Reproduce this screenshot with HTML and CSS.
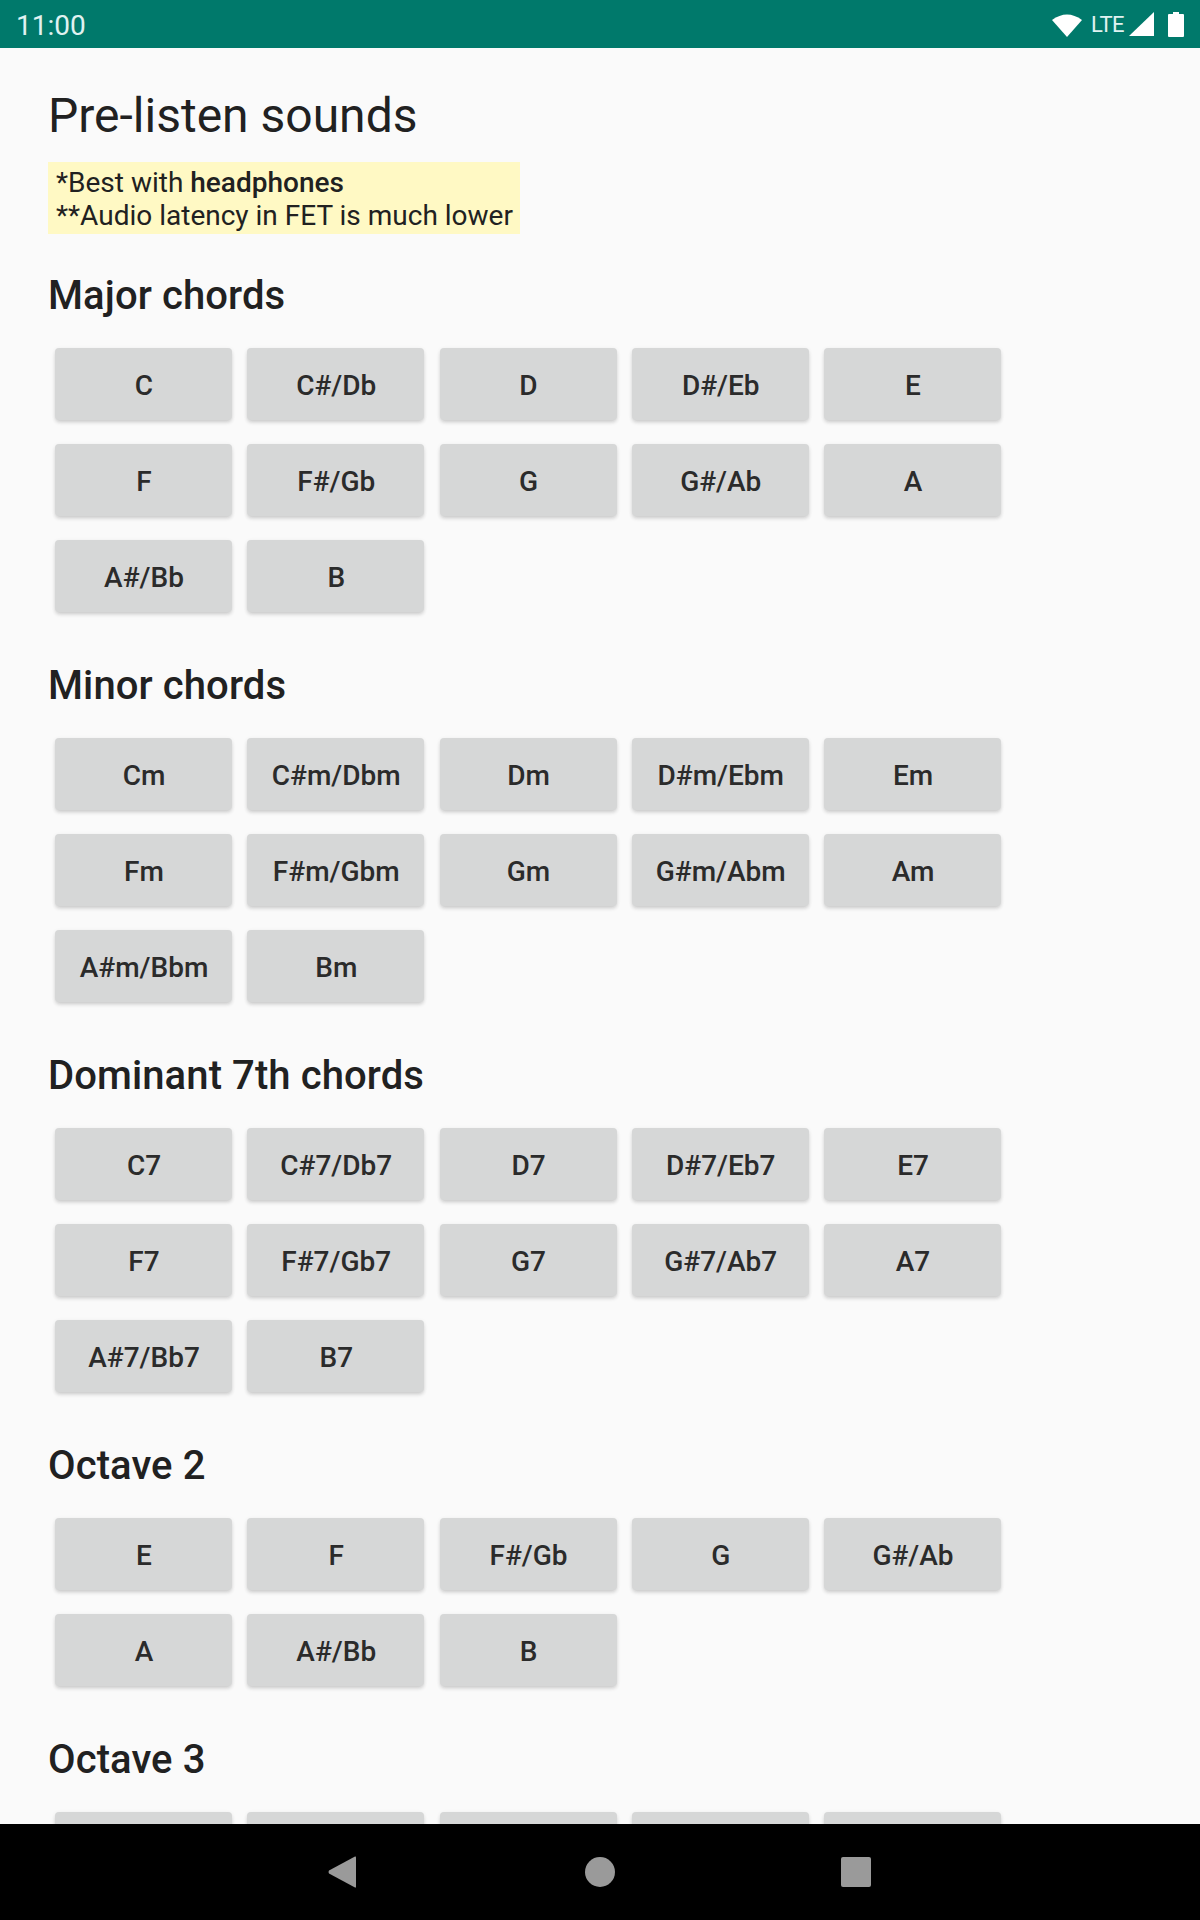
FILE: index.html
```html
<!DOCTYPE html>
<html lang="en">
  <head>
    <meta charset="UTF-8">
    <meta name="viewport" content="width=device-width, initial-scale=1.0">
    <title>Pre-listen sounds</title>
    <link rel="stylesheet" href="styles.css">
  </head>
  <body>
    <div class="status-bar">
      <span class="time">11:00</span>
      <div class="status-icons">
        <svg class="icon-wifi" viewBox="0 0 30 25"><path d="M15 25 L0 8 Q15 -3 30 8 Z"/></svg>
        <span class="lte">LTE</span>
        <svg class="icon-signal" viewBox="0 0 25 24"><path d="M0 24 L25 0 V24 Z"/></svg>
        <svg class="icon-battery" viewBox="0 0 16 25"><path d="M5 0 H11 V2 H15 Q16 2 16 3 V24 Q16 25 15 25 H1 Q0 25 0 24 V3 Q0 2 1 2 H5 Z"/></svg>
      </div>
    </div>

    <div class="content">
      <h1>Pre-listen sounds</h1>
      <p class="note">*Best with <strong>headphones</strong><br>**Audio latency in FET is much lower</p>

      <h2>Major chords</h2>
      <div class="chords">
        <button>C</button>
        <button>C#/Db</button>
        <button>D</button>
        <button>D#/Eb</button>
        <button>E</button>
        <button>F</button>
        <button>F#/Gb</button>
        <button>G</button>
        <button>G#/Ab</button>
        <button>A</button>
        <button>A#/Bb</button>
        <button>B</button>
      </div>

      <h2>Minor chords</h2>
      <div class="chords">
        <button>Cm</button>
        <button>C#m/Dbm</button>
        <button>Dm</button>
        <button>D#m/Ebm</button>
        <button>Em</button>
        <button>Fm</button>
        <button>F#m/Gbm</button>
        <button>Gm</button>
        <button>G#m/Abm</button>
        <button>Am</button>
        <button>A#m/Bbm</button>
        <button>Bm</button>
      </div>

      <h2>Dominant 7th chords</h2>
      <div class="chords">
        <button>C7</button>
        <button>C#7/Db7</button>
        <button>D7</button>
        <button>D#7/Eb7</button>
        <button>E7</button>
        <button>F7</button>
        <button>F#7/Gb7</button>
        <button>G7</button>
        <button>G#7/Ab7</button>
        <button>A7</button>
        <button>A#7/Bb7</button>
        <button>B7</button>
      </div>

      <h2>Octave 2</h2>
      <div class="chords">
        <button>E</button>
        <button>F</button>
        <button>F#/Gb</button>
        <button>G</button>
        <button>G#/Ab</button>
        <button>A</button>
        <button>A#/Bb</button>
        <button>B</button>
      </div>

      <h2>Octave 3</h2>
      <div class="chords">
        <button></button>
        <button></button>
        <button></button>
        <button></button>
        <button></button>
      </div>
    </div>

    <div class="nav-bar">
      <svg class="nav-back" viewBox="0 0 28 32"><path d="M27 0.5 Q28 0 28 1.5 V30.5 Q28 32 27 31.5 L1 17.5 Q0 16 1 14.5 Z"/></svg>
      <div class="nav-home"></div>
      <div class="nav-recent"></div>
    </div>
  </body>
</html>
```

FILE: styles.css
```css
body{
  margin: 0;
  height: 1920px;
  display: flex;
  flex-direction: column;
  overflow: hidden;
  background-color: #fafafa;
  color: #212121;
  font-family: Roboto, sans-serif;
}
.status-bar{
  height: 48px;
  flex: none;
  background-color: #00796b;
  color: #e0f2f1;
  display: flex;
  align-items: center;
  justify-content: space-between;
  padding: 0 16px;
}
.time{
  font-size: 28px;
  padding-top: 2px;
}
.status-icons{
  display: flex;
  align-items: center;
}
.status-icons svg{
  fill: white;
  display: block;
}
.icon-wifi{
  width: 30px;
  height: 25px;
  margin-right: 9px;
}
.lte{
  font-size: 22px;
  width: 38px;
  letter-spacing: -0.5px;
}
.icon-signal{
  width: 25px;
  height: 24px;
  margin-right: 14px;
}
.icon-battery{
  width: 16px;
  height: 25px;
}
.content{
  flex: 1;
  overflow: hidden;
  padding: 0 48px;
}
h1{
  margin: 40px 0 0;
  font-size: 48px;
  line-height: 56px;
  font-weight: 400;
}
.note{
  margin: 18px 0 0;
  width: fit-content;
  padding: 4px 7px 2px 8px;
  background-color: #fff9c4;
  font-size: 28px;
  line-height: 33px;
}
.note strong{
  font-weight: 500;
}
h2{
  margin: 38px 0 0;
  font-size: 40px;
  line-height: 47px;
  font-weight: 500;
  letter-spacing: 0.1px;
}
.chords{
  display: grid;
  grid-template-columns: repeat(5, 177px);
  column-gap: 15.25px;
  row-gap: 24px;
  margin: 29px 0 50px 7px;
}
.chords + h2{
  margin-top: 0;
}
.chords button{
  height: 72px;
  border: none;
  border-radius: 4px;
  padding: 2px 0 0 1px;
  background-color: #d6d7d7;
  color: #2b2b2b;
  font-family: Roboto, sans-serif;
  font-size: 28px;
  font-weight: 500;
  box-shadow: 0 3px 4px -1px rgba(0, 0, 0, 0.16), 0 1px 4px 0 rgba(0, 0, 0, 0.08);
}
.nav-bar{
  height: 96px;
  flex: none;
  background-color: black;
  position: relative;
}
.nav-back, .nav-home, .nav-recent{
  position: absolute;
  top: 33px;
}
.nav-back{
  left: 328px;
  top: 32px;
  width: 28px;
  height: 32px;
  fill: #9a9a9a;
}
.nav-home{
  left: 585px;
  width: 30px;
  height: 30px;
  border-radius: 50%;
  background-color: #9a9a9a;
}
.nav-recent{
  left: 841px;
  width: 30px;
  height: 30px;
  border-radius: 2px;
  background-color: #9a9a9a;
}
```
